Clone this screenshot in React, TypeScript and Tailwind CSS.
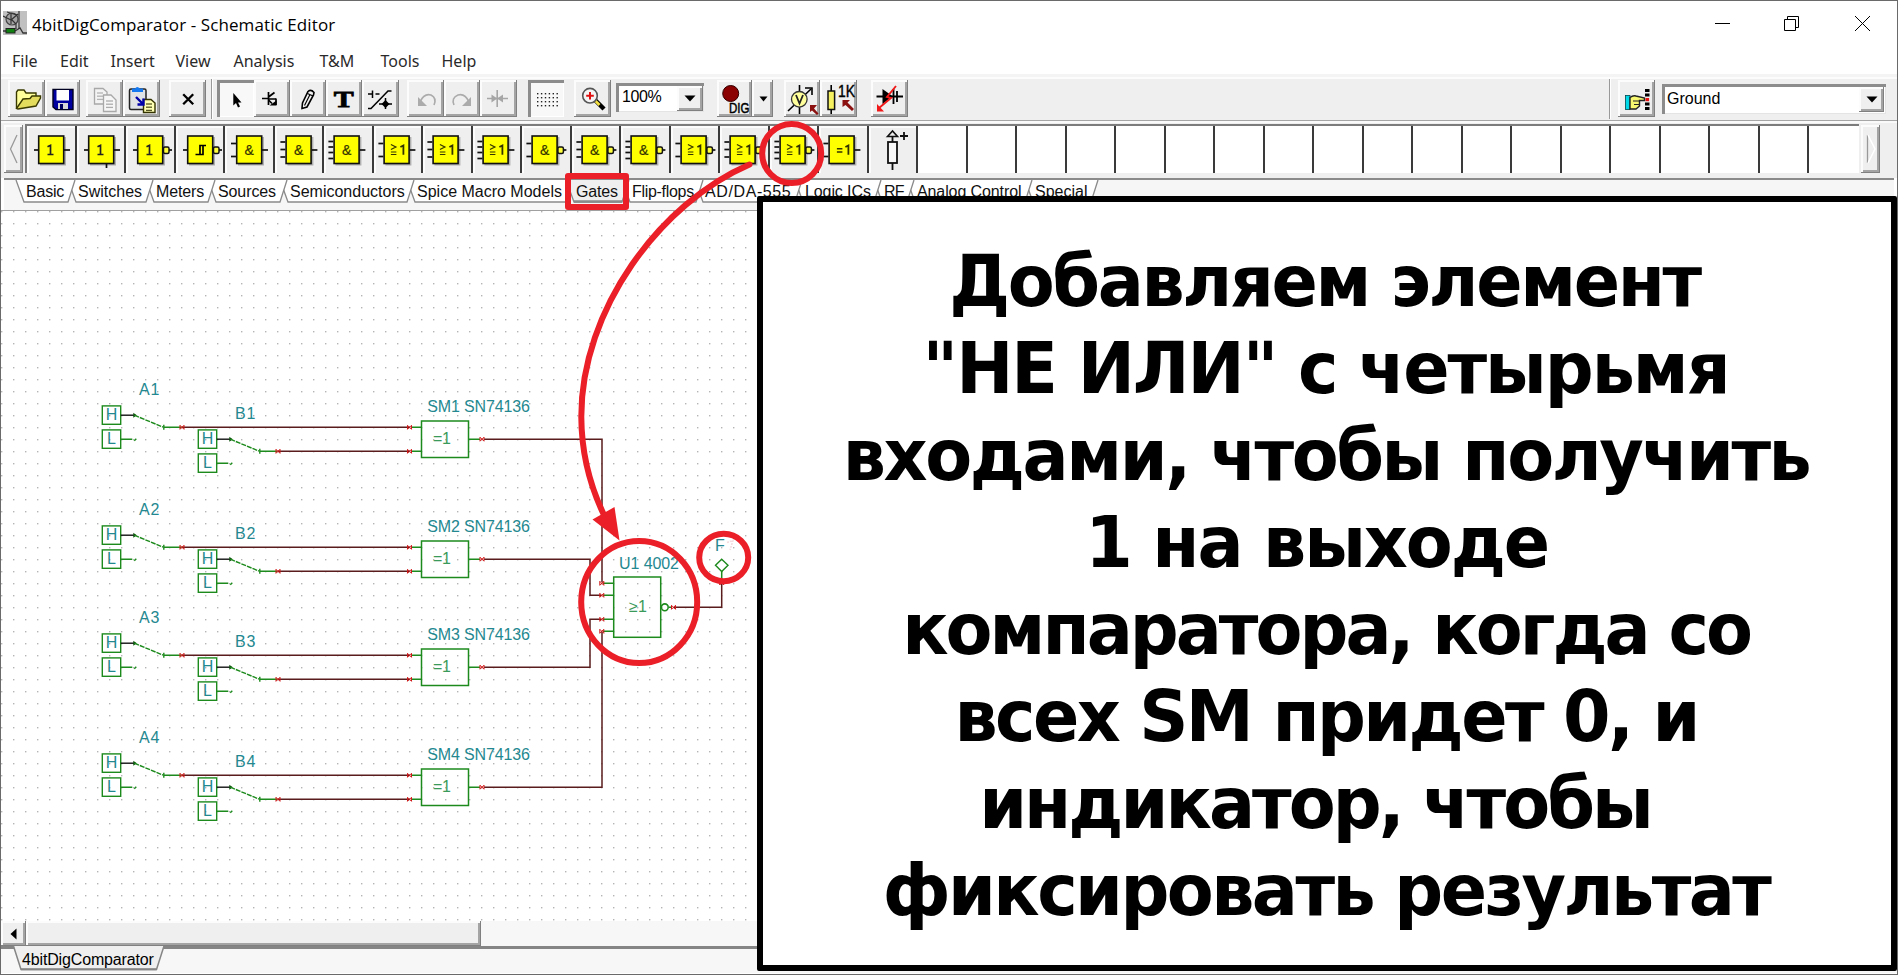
import React from "react";

const UI = "font-['Liberation_Sans',sans-serif]";
const RAISED =
  "shadow-[inset_-1px_-1px_0_#808080,inset_2px_2px_0_#fcfcfc,inset_-3px_-3px_0_#a4a4a4]";
const SUNKEN =
  "bg-[#f8f8f8] shadow-[inset_3px_3px_0_#8c8c8c,inset_-1px_-1px_0_#ffffff]";

function Tool({ className, pressed, children }: { className: string; pressed?: boolean; children: React.ReactNode }) {
  return (
    <button className={`h-[37px] shrink-0 ${pressed ? SUNKEN : RAISED} ${className}`}>
      <svg className="block overflow-visible" width="37" height="37" viewBox="0 0 37 37">
        {children}
      </svg>
    </button>
  );
}

function DropArrow({ className }: { className: string }) {
  return (
    <span className={`flex items-center justify-center bg-[#efefef] ${RAISED} ${className}`}>
      <svg width="12" height="7" viewBox="0 0 12 7">
        <path d="M0.5 0.5H11.5L6 6.5Z" fill="#000" />
      </svg>
    </span>
  );
}

const docLines = (x: number, y: number, w: number, n: number, c: string) =>
  Array.from({ length: n }, (_, i) => <path key={i} d={`M${x} ${y + i * 3.2}h${w}`} stroke={c} strokeWidth="1.3" />);

function MainToolbar() {
  return (
    <div className="flex h-[47px] shrink-0 items-start border-b border-[#a6a6a6] bg-[#efefef] pt-[6px] pl-[7px] shadow-[inset_0_3px_0_#f4f4f4,inset_0_5px_0_#fcfcfc]">
      <Tool className="w-[37px]">
        <path d="M8.5 28V12L10 10H16L18 13H28V18" fill="#ffff9c" stroke="#3a3a00" strokeWidth="1.4" />
        <path d="M8.5 28.5L15 19L22 18.5L24 16H32.5V18L28 26L10 29Z" fill="#e4dc5c" stroke="#3a3a00" strokeWidth="1.4" />
      </Tool>
      <Tool className="w-[35px]">
        <path d="M8 9.5H28V29.5H11L8 27Z" fill="#0000a0" stroke="#000020" strokeWidth="1.4" />
        <rect x="11.5" y="10" width="12.5" height="10.5" fill="#fff" />
        <rect x="13" y="23" width="10" height="6" fill="#d8d8d8" />
        <rect x="15" y="24" width="3" height="5" fill="#000060" />
      </Tool>
      <Tool className="ml-[6px] w-[37px]">
        <path d="M8.5 8.5H17L21 12V24H8.5Z" fill="#f3f3f3" stroke="#a8a8a8" strokeWidth="1.3" />
        {docLines(11, 13, 6, 3, "#b4b4b4")}
        <path d="M17.5 15H25L30 20V31.5H17.5Z" fill="#f6f6f6" stroke="#a8a8a8" strokeWidth="1.3" />
        {docLines(20, 21, 7, 3, "#acacac")}
      </Tool>
      <Tool className="w-[37px]">
        <rect x="6.5" y="9" width="16.5" height="20.5" rx="1.5" fill="#dfe3e6" stroke="#222" strokeWidth="1.5" />
        <path d="M9 12V8.5H12Q14 5.5 17 8.5H20V12Z" fill="#1478f0" />
        <path d="M20.5 19.5H28L32 23V32.5H20.5Z" fill="#ffffb4" stroke="#333300" strokeWidth="1.4" />
        {docLines(23, 24, 6, 3, "#555522")}
        <path d="M13 17L20 24M20.5 18.5V24.5H14.5" fill="none" stroke="#0000a8" strokeWidth="2.4" />
      </Tool>
      <Tool className="ml-[9px] w-[37px]">
        <path d="M14.2 14.2L24.2 24.2M24.2 14.2L14.2 24.2" stroke="#000" strokeWidth="2.3" />
      </Tool>
      <div className="-mt-[1px] ml-[5px] h-[40px] w-[2px] border-l border-[#999] bg-white" />
      <Tool pressed className="ml-[4px] w-[37px]">
        <path d="M16.3 13V25.5L19 23L21 27.5L23 26.5L21 22.5H24.5Z" fill="#000" />
      </Tool>
      <Tool className="w-[36px]">
        <path d="M8 18.5H14M14.5 12V25M14.5 19H22M14.5 17L20.5 12.5" stroke="#000" strokeWidth="1.7" fill="none" />
        <path d="M14.5 20L18 23.5M22 18.5V25" stroke="#000" strokeWidth="1.7" />
        <path d="M15.5 25.5H22.5V20.5Z" fill="#000" />
      </Tool>
      <Tool className="w-[36px]">
        <path d="M12 28L12.5 23L18 11.5Q21 9 24 12.5L23.5 15L17 27L12 28.5Z" fill="#f2f2f2" stroke="#000" strokeWidth="1.6" />
        <path d="M17.5 13.5L23 16M20 14.5L14.5 25.5" stroke="#000" strokeWidth="1.2" />
      </Tool>
      <Tool className="w-[36px]">
        <text x="17.8" y="27" textAnchor="middle" textLength="20" lengthAdjust="spacingAndGlyphs" className="font-['Liberation_Serif',serif] text-[24px] font-bold" stroke="#000" strokeWidth="0.8">T</text>
      </Tool>
      <Tool className="w-[37px]">
        <path d="M6 14H10.5M10.5 10.5V18M13.5 14H17.5M6 28.5H9L26 11H29.5M17 24H30M23.5 18V29" stroke="#000" strokeWidth="1.5" fill="none" />
        <path d="M23.5 20L27.5 24L23.5 28L19.5 24Z" fill="#000" />
      </Tool>
      <Tool className="ml-[8px] w-[37px]">
        <path d="M13 22Q17 13 24 15Q30 18 27 25" fill="none" stroke="#ababab" strokeWidth="1.6" />
        <path d="M11 17V26H20Z" fill="#ababab" />
      </Tool>
      <Tool className="w-[36px]">
        <path d="M25 22Q21 13 14 15Q7 18 10 25" fill="none" stroke="#ababab" strokeWidth="1.6" />
        <path d="M27 17V26H18Z" fill="#ababab" />
      </Tool>
      <Tool className="w-[37px]">
        <path d="M17.2 10V27M7 18.5H28" stroke="#a6a6a6" strokeWidth="1.6" />
        <path d="M11.5 14.5L17.2 18.5L11.5 22.5ZM23 14.5L17.2 18.5L23 22.5Z" fill="#a6a6a6" />
      </Tool>
      <Tool pressed className="ml-[11px] w-[36px]">
        {[0, 1, 2, 3].map((r) =>
          [0, 1, 2, 3, 4, 5].map((c) => <rect key={`${r}-${c}`} x={9 + c * 3.9} y={13 + r * 4} width="1.4" height="1.4" fill="#222" />),
        )}
      </Tool>
      <Tool className="ml-[10px] w-[37px]">
        <path d="M21 20L30 29" stroke="#000" strokeWidth="4.4" />
        <path d="M20 19.5L25.5 25" stroke="#f4e040" strokeWidth="2.6" />
        <circle cx="16" cy="15.7" r="7.3" fill="#f4f4f4" stroke="#555" strokeWidth="1.6" />
        <path d="M16 12V19.6M12.2 15.7H19.8" stroke="#e01010" strokeWidth="2" />
      </Tool>
      <div className="mt-[3px] ml-[5px] flex h-[29px] w-[88px] items-start bg-white shadow-[inset_3px_3px_0_#8c8c8c,inset_-1px_-1px_0_#e4e4e4]">
        <span className={`${UI} mt-[4px] ml-[6px] w-[55px] text-[16px] leading-[20px] tracking-[-0.4px]`}>100%</span>
        <DropArrow className="mt-[3px] h-[25px] w-[26px]" />
      </div>
      <Tool className="ml-[13px] w-[35px]">
        <circle cx="13.7" cy="13.5" r="8" fill="#8b0000" stroke="#300" strokeWidth="1" />
        <text x="12" y="32.5" textLength="20.5" lengthAdjust="spacingAndGlyphs" className="font-['Liberation_Sans',sans-serif] text-[15px]" stroke="#000" strokeWidth="0.5">DIG</text>
      </Tool>
      <Tool className="w-[21px]">
        <path d="M7.5 16.5H15.5L11.5 21.5Z" fill="#000" />
      </Tool>
      <Tool className="ml-[11px] w-[36px]">
        <path d="M15.5 5V34M4 31L27 9" stroke="#000" strokeWidth="1.6" />
        <path d="M21 8H28V15" fill="none" stroke="#000" strokeWidth="1.6" />
        <circle cx="15.3" cy="19.3" r="7.8" fill="#ffff9c" stroke="#333" strokeWidth="1.3" />
        <path d="M12 15L15.5 23.5L19 15" fill="none" stroke="#222" strokeWidth="1.8" />
        <path d="M26 25V32L28 30.5L33 35L34.5 33.5L30 28.5L33 25Z" fill="#8b1010" />
      </Tool>
      <Tool className="w-[37px]">
        <path d="M11.2 5V34" stroke="#000" strokeWidth="1.6" />
        <rect x="8" y="11" width="6.6" height="18.5" fill="#f4f060" stroke="#111" strokeWidth="1.5" />
        <text x="18" y="17" textLength="17" lengthAdjust="spacingAndGlyphs" className="font-['Liberation_Sans',sans-serif] text-[16px]" stroke="#000" strokeWidth="0.4">1K</text>
        <path d="M22.5 20H30L27.5 22.5L34 29L32 31L25.5 25L22.5 27Z" fill="#8b1010" />
      </Tool>
      <Tool className="ml-[14px] w-[37px]">
        <path d="M5.5 16.5H32M26 11V22M22.5 9V24" stroke="#000" strokeWidth="1.8" />
        <path d="M11.5 9V24L22 16.5Z" fill="#000" />
        <path d="M25 6L16 17L20 18L8 28" fill="none" stroke="#f01818" strokeWidth="1.9" />
        <path d="M6 24V31.5H13Z" fill="#f01818" />
      </Tool>
      <div className="-mt-[1px] ml-[701px] h-[40px] w-[2px] border-l border-[#999] bg-white" />
      <Tool className="ml-[7px] w-[37px]">
        <rect x="7.5" y="15.5" width="4.5" height="14" fill="#00d8e8" stroke="#004850" strokeWidth="0.8" />
        <path d="M12 17.5Q15 15 18 16L26.5 18V20.5H21.5V26L18 29H12Z" fill="#f8f870" stroke="#222" strokeWidth="1.4" />
        <path d="M15 21H21M16 24.5H21" stroke="#222" strokeWidth="1.2" />
        {[9, 13.5, 22.5, 27].map((y) => (
          <rect key={y} x="27" y={y} width="4.5" height="3" fill="#000" />
        ))}
        <rect x="27.5" y="18" width="3.6" height="3.2" fill="#e81010" />
      </Tool>
      <div className="mt-[4px] ml-[7px] flex h-[30px] w-[224px] items-start bg-white shadow-[inset_3px_3px_0_#8c8c8c,inset_-1px_-1px_0_#e4e4e4]">
        <span className={`${UI} mt-[5px] ml-[5px] w-[192px] text-[16px] leading-[20px]`}>Ground</span>
        <DropArrow className="mt-[3px] h-[25px] w-[25px]" />
      </div>
    </div>
  );
}

type Gate = { label: string; inputs: number; inverted?: boolean; enable?: boolean };

const gates: Gate[] = [
  { label: "1", inputs: 1 },
  { label: "1", inputs: 1, enable: true },
  { label: "1", inputs: 1, inverted: true },
  { label: "schmitt", inputs: 1, inverted: true },
  { label: "&", inputs: 2 },
  { label: "&", inputs: 3 },
  { label: "&", inputs: 4 },
  { label: "≥1", inputs: 2 },
  { label: "≥1", inputs: 3 },
  { label: "≥1", inputs: 4 },
  { label: "&", inputs: 2, inverted: true },
  { label: "&", inputs: 3, inverted: true },
  { label: "&", inputs: 4, inverted: true },
  { label: "≥1", inputs: 2, inverted: true },
  { label: "≥1", inputs: 3, inverted: true },
  { label: "≥1", inputs: 4, inverted: true },
  { label: "=1", inputs: 2 },
];

const pinRows: Record<number, number[]> = {
  1: [24],
  2: [17.5, 30.5],
  3: [16, 23.5, 31],
  4: [15.5, 21, 26.5, 32.5],
};

function GateIcon({ gate, dx }: { gate: Gate; dx: number }) {
  const { label, inputs, inverted, enable } = gate;
  return (
    <svg className="block" width="47" height="46" viewBox="0 0 47 46">
      <g transform={`translate(${dx} 0)`}>
        <rect x="13" y="11" width="26" height="28.5" fill="#b0b0b0" />
        {pinRows[inputs].map((y) => (
          <path key={y} d={`M${inputs > 1 ? 6 : 7} ${y}H11`} stroke="#111" strokeWidth="1.7" />
        ))}
        {enable && <path d="M29.5 38V42" stroke="#111" strokeWidth="1.7" />}
        <path d={inverted ? "M43 24H46" : "M37 24H43"} stroke="#111" strokeWidth="1.7" />
        {inverted && <rect x="37.5" y="21" width="5.5" height="6.5" rx="1.5" fill="#ffff40" stroke="#111" strokeWidth="1.5" />}
        <rect x="11.7" y="10" width="25" height="27.5" fill="#ffff00" stroke="#111" strokeWidth="1.6" />
        {label === "schmitt" && <path d="M19.5 28.5H24V19.5H30M23.5 28.5H27V19.5" fill="none" stroke="#000" strokeWidth="1.7" />}
        {label === "1" && <path d="M20.5 20.8L23.5 19.3V28.5M20.5 28.5H26.5" fill="none" stroke="#222" strokeWidth="1.7" />}
        {label === "&" && (
          <text x="24.2" y="28.5" textAnchor="middle" fill="#333300" stroke="#333300" strokeWidth="0.2" className="font-['Liberation_Sans',sans-serif] text-[14px]">&amp;</text>
        )}
        {(label === "≥1" || label === "=1") && (
          <g stroke="#333300" strokeWidth="1.5" fill="none">
            <path d="M28 21L31 19.5V28.8" strokeWidth="1.8" />
            {label === "≥1" ? (
              <path d="M18.5 18.5L23.5 21L18.5 23.5M18.5 26H24M18.5 28.5H24" strokeWidth="1.2" />
            ) : (
              <path d="M19.5 22.7H25M19.5 26H25" />
            )}
          </g>
        )}
      </g>
    </svg>
  );
}

function GateStrip() {
  return (
    <div className="flex h-[57px] shrink-0 items-start bg-[#efefef] pt-[3px] pl-[3px] shadow-[inset_0_2px_0_#fafafa]">
      <button className={`mt-[1px] flex h-[48px] w-[19px] items-center justify-center ${RAISED}`}>
        <svg width="9" height="30" viewBox="0 0 9 30">
          <path d="M8 1L1.5 15L8 29" fill="none" stroke="#999" strokeWidth="1.3" />
        </svg>
      </button>
      <div className="ml-[2px] flex h-[49px] w-[1834px] overflow-hidden border-t-2 border-l-2 border-[#7c7c7c] bg-white">
        {gates.map((g, i) => (
          <div key={i} className="h-[47px] w-[49.5px] shrink-0 border-r-2 border-[#3a3a3a] bg-[#efefef] shadow-[inset_2px_2px_0_#fcfcfc]">
            <GateIcon gate={g} dx={i > 5 ? -1.6 : i === 5 ? -0.6 : 0} />
          </div>
        ))}
        <div className="h-[47px] w-[49.5px] shrink-0 border-r-2 border-[#3a3a3a] bg-[#efefef] shadow-[inset_2px_2px_0_#fcfcfc]">
          <svg className="block" width="47" height="46" viewBox="0 0 47 46">
            <path d="M23.5 9V16M23.5 37V44" stroke="#111" strokeWidth="1.8" />
            <path d="M18.5 10.5L23.5 5L28.5 10.5Z" fill="#efefef" stroke="#111" strokeWidth="1.6" />
            <rect x="19" y="16" width="9" height="21" fill="#f8f8f8" stroke="#111" strokeWidth="1.8" />
            <path d="M31 10H39M35 6V14" stroke="#111" strokeWidth="1.8" />
          </svg>
        </div>
        {Array.from({ length: 18 }, (_, i) => (
          <div key={i} className="h-[47px] w-[49.5px] shrink-0 border-r-2 border-[#3a3a3a]" />
        ))}
      </div>
      <button className={`mt-[1px] ml-[2px] flex h-[48px] w-[19px] items-center justify-center ${RAISED}`}>
        <svg width="10" height="30" viewBox="0 0 10 30">
          <path d="M1.5 29V1" stroke="#999" strokeWidth="1.3" />
          <path d="M2 1L9 15L2 29" fill="none" stroke="#fff" strokeWidth="1.6" />
        </svg>
      </button>
    </div>
  );
}

const tabs = [
  { name: "Basic", w: 38, cls: "w-[52px] z-[20] tracking-[-0.2px]" },
  { name: "Switches", w: 64, cls: "w-[78px] z-[19] tracking-[0px]" },
  { name: "Meters", w: 48, cls: "w-[62px] z-[18] tracking-[-0.15px]" },
  { name: "Sources", w: 58, cls: "w-[72px] z-[17] tracking-[-0.1px]" },
  { name: "Semiconductors", w: 113, cls: "w-[127px] z-[16] tracking-[0px]" },
  { name: "Spice Macro Models", w: 145, cls: "w-[159px] z-[15] tracking-[0px]" },
  { name: "Gates", w: 42, cls: "w-[56px] z-[21] tracking-[-0.2px]" },
  { name: "Flip-flops", w: 60, cls: "w-[73px] z-[13] tracking-[-0.3px]" },
  { name: "AD/DA-555", w: 86, cls: "w-[100px] z-[12] tracking-[0.6px]" },
  { name: "Logic ICs", w: 65, cls: "w-[79px] z-[11] tracking-[-0.1px]" },
  { name: "RF", w: 19, cls: "w-[33px] z-[10] tracking-[-0.8px]" },
  { name: "Analog Control", w: 104, cls: "w-[118px] z-[9] tracking-[-0.1px]" },
  { name: "Special", w: 52, cls: "w-[70px] z-[8] tracking-[0px]" },
];

function CategoryTabs() {
  return (
    <div className="mx-[3px] flex h-[32px] shrink-0 border-t-2 border-[#8a8a8a] bg-[#f6f6f6] pl-[22px]">
      {tabs.map((t) => {
        const active = t.name === "Gates";
        const r = t.w;
        return (
          <div key={t.name} className={`relative h-[24px] shrink-0 ${t.cls}`}>
            <svg className="absolute top-0 left-0 overflow-visible" width="1" height="24" viewBox="0 0 1 24">
              <path d={`M-10 0L-2 22H${r + 4}L${r + 11} 0`} fill={active ? "#efefef" : "#ffffff"} stroke="#8a8a8a" strokeWidth="1.3" />
              {active && <path d={`M-2 21.5H${r + 4}`} stroke="#8a8a8a" strokeWidth="2.5" />}
            </svg>
            <span className={`${UI} relative block pt-[2px] text-[16px] leading-[20px] whitespace-nowrap text-[#111]`}>{t.name}</span>
          </div>
        );
      })}
    </div>
  );
}

const GREEN = "#1c8a1c";
const TEAL = "#248890";
const WIRE = "#5a1c1c";
const schText = "font-['Liberation_Sans',sans-serif] text-[16px]";

function Pin({ x, y }: { x: number; y: number }) {
  return <path d={`M${x - 2} ${y - 2}L${x + 2} ${y + 2}M${x + 2} ${y - 2}L${x - 2} ${y + 2}M${x - 2} ${y - 2}V${y + 2}M${x + 2} ${y - 2}V${y + 2}`} stroke="#d01818" strokeWidth="1" />;
}

function LogicSwitch({ x, y, name, nx }: { x: number; y: number; name: string; nx: number }) {
  return (
    <g>
      <text x={nx} y={y - 20.7} fill={TEAL} textLength="20.5" className={schText}>{name}</text>
      {["H", "L"].map((l, i) => (
        <g key={l}>
          <rect x={x} y={y - 9.3 + i * 24} width="18.4" height="18.4" fill="none" stroke={GREEN} strokeWidth="1.4" />
          <text x={x + 9.2} y={y + 5.2 + i * 24} textAnchor="middle" fill={TEAL} className={schText}>{l}</text>
        </g>
      ))}
      <path d={`M${x + 18.5} ${y}H${x + 32}`} stroke="#111" strokeWidth="1.4" />
      <path d={`M${x + 31} ${y - 2.5}V${y + 2.5}L${x + 34.5} ${y}Z`} fill="#0a500a" />
      <path d={`M${x + 32} ${y}L${x + 61} ${y + 12}`} stroke={GREEN} strokeWidth="1.4" strokeDasharray="5 1" />
      <path d={`M${x + 61} ${y + 12}H${x + 79}M${x + 61.5} ${y + 9.5}V${y + 14.5}M${x + 18.5} ${y + 24}H${x + 30}M${x + 32} ${y + 25.5}L${x + 34} ${y + 23.5}`} stroke={GREEN} strokeWidth="1.4" />
    </g>
  );
}

const rows = [
  { n: 1, dy: 0, out: "M484 439.2H602V582" },
  { n: 2, dy: 120, out: "M484 559.2H590V595.2H601" },
  { n: 3, dy: 228, out: "M484 667.2H590V619.2H601" },
  { n: 4, dy: 348, out: "M484 787.2H602V632" },
];

function Schematic() {
  return (
    <svg className="block" width="756" height="711" viewBox="1 211 756 711">
      <defs>
        <pattern id="grid" x="1" y="7" width="12" height="12" patternUnits="userSpaceOnUse">
          <rect x="0" y="0" width="1.4" height="1.4" fill="#b4b4b4" />
        </pattern>
      </defs>
      <rect x="1" y="211" width="756" height="711" fill="#fff" />
      <rect x="1" y="211" width="756" height="711" fill="url(#grid)" />
      {rows.map(({ n, dy, out }) => (
        <g key={n}>
          <LogicSwitch x={102.3} y={415.2 + dy} name={`A${n}`} nx={139} />
          <LogicSwitch x={198.3} y={439.2 + dy} name={`B${n}`} nx={235} />
          <path d={`M182 ${427.3 + dy}H410M278 ${451.3 + dy}H410`} stroke={WIRE} strokeWidth="1.5" />
          <path d={`M411 ${427.3 + dy}H421M411 ${451.3 + dy}H421M469 ${439.2 + dy}H480`} stroke={GREEN} strokeWidth="1.5" />
          <rect x="421.5" y={421 + dy} width="47" height="36.5" fill="none" stroke={GREEN} strokeWidth="1.5" />
          <text x="433" y={444 + dy} fill="#3a9a5a" textLength="18" className={schText}>=1</text>
          <text x="427.3" y={412.2 + dy} fill={TEAL} textLength="102.5" className={schText}>{`SM${n} SN74136`}</text>
          <path d={out} fill="none" stroke={WIRE} strokeWidth="1.5" />
          <Pin x={182} y={427.3 + dy} />
          <Pin x={278} y={451.3 + dy} />
          <Pin x={409.5} y={427.3 + dy} />
          <Pin x={409.5} y={451.3 + dy} />
          <Pin x={482} y={439.2 + dy} />
        </g>
      ))}
      <rect x="613.7" y="577" width="47" height="60.3" fill="none" stroke={GREEN} strokeWidth="1.5" />
      <path d="M603 583.3H613M603 595.3H613M603 619.3H613M603 631.3H613M669 607.3H672M721.7 571V584" stroke={GREEN} strokeWidth="1.5" />
      <circle cx="664.8" cy="607.3" r="3.4" fill="none" stroke={GREEN} strokeWidth="1.6" />
      <path d="M674 607.3H721.7V584" fill="none" stroke={WIRE} strokeWidth="1.5" />
      {[583.3, 595.3, 619.3, 631.3].map((y) => (
        <Pin key={y} x={601.8} y={y} />
      ))}
      <Pin x={673.5} y={607.3} />
      <Pin x={721.7} y={583} />
      <path d="M721.7 559.3L728 565.3L721.7 571.5L715.5 565.3Z" fill="none" stroke={GREEN} strokeWidth="1.4" />
      <text x="619" y="568.5" fill={TEAL} textLength="60" className={schText}>U1 4002</text>
      <text x="629" y="612" fill="#3a9a5a" textLength="18" className={schText}>≥1</text>
      <text x="715" y="550.5" fill={TEAL} className={schText}>F</text>
      <path d="M727 542.5L733 540.5L730 550" fill="none" stroke="#f4dce0" strokeWidth="1.6" strokeDasharray="2 1" />
    </svg>
  );
}

const captionLines = [
  { text: "Добавляем элемент", cls: "pr-[5px] tracking-[-2.24px]" },
  { text: "\"НЕ ИЛИ\" с четырьмя", cls: "pr-[3px] tracking-[-1.93px]" },
  { text: "входами, чтобы получить", cls: "pr-[2px] tracking-[-2.29px]" },
  { text: "1 на выходе", cls: "pr-[20px] tracking-[-2px]" },
  { text: "компаратора, когда со", cls: "pr-[2px] tracking-[-2.83px]" },
  { text: "всех SM придет 0, и", cls: "pr-[2px] tracking-[-2.48px]" },
  { text: "индикатор, чтобы", cls: "pr-[23px] tracking-[-2.8px]" },
  { text: "фиксировать результат", cls: "pr-[2px] tracking-[-2.43px]" },
];

function Caption() {
  return (
    <div className="absolute top-[196px] left-[757px] z-40 flex h-[775px] w-[1140px] flex-col items-center rounded-[2px] border-[6px] border-black bg-white pt-[36px]">
      <div className="flex scale-x-[1.055] flex-col items-center">
        {captionLines.map((l) => (
          <div
            key={l.text}
            className={`h-[87px] font-['DejaVu_Sans_Condensed','DejaVu_Sans',sans-serif] text-[72px] leading-[87px] font-bold whitespace-nowrap text-black [font-stretch:condensed] ${l.cls}`}
          >
            {l.text}
          </div>
        ))}
      </div>
    </div>
  );
}

function Highlights() {
  return (
    <svg className="pointer-events-none absolute top-0 left-0 z-50" width="860" height="700" viewBox="0 0 860 700" fill="none" stroke="#ea1f27" strokeWidth="6">
      <circle cx="791.7" cy="153.5" r="29.5" />
      <rect x="568" y="176" width="58" height="31" strokeLinejoin="round" />
      <ellipse cx="639.2" cy="602" rx="58" ry="61" />
      <ellipse cx="723.7" cy="557.5" rx="24.5" ry="23.7" />
      <path d="M749.5 164.5C660 203 581 310 581.3 417C581.5 455 592 490 604 515" strokeLinecap="round" />
      <path d="M619.5 540.5L592.5 519.5L614.5 507Z" fill="#ea1f27" stroke="none" />
    </svg>
  );
}

const menu = [
  { name: "File", cls: "w-[48px]" },
  { name: "Edit", cls: "w-[50.5px]" },
  { name: "Insert", cls: "w-[65px]" },
  { name: "View", cls: "w-[58px]" },
  { name: "Analysis", cls: "w-[86px]" },
  { name: "T&M", cls: "w-[61px]" },
  { name: "Tools", cls: "w-[61px]" },
  { name: "Help", cls: "w-[60px]" },
];

export default function App() {
  return (
    <div className="relative h-[975px] w-[1898px] overflow-hidden bg-white">
      <div className="flex h-[975px] w-[1898px] flex-col border border-[#6a6a6a]">
        <header className="flex h-[47px] shrink-0 items-start">
          <svg className="mt-[10px] ml-[2px]" width="24" height="24" viewBox="0 0 24 24">
            <rect width="24" height="24" fill="#c0c0c0" />
            <circle cx="9" cy="8" r="6" fill="#a4a4a4" stroke="#444" strokeWidth="1.2" />
            <path d="M0 5L8 9M8 3V13M8 9L15 3M8 8L13 13V18M4 1L14 4M16 0V18" stroke="#333" strokeWidth="1.2" fill="none" />
            <path d="M0 20H3M12 20L17 17L20 22H24" stroke="#333" strokeWidth="1.3" fill="none" />
            <rect x="3" y="17.5" width="9" height="4.5" fill="#108010" stroke="#222" />
          </svg>
          <h1 className="mt-[12px] ml-[5px] font-['Open_Sans',sans-serif] text-[17px] leading-[24px] tracking-[0.1px] text-black">
            4bitDigComparator - Schematic Editor
          </h1>
          <svg className="mt-[14px] ml-auto mr-[26px]" width="157" height="17" viewBox="1714 15 157 17" fill="none" stroke="#000" strokeWidth="1">
            <path d="M1715 23.5H1730" />
            <path d="M1784.5 19.5H1795.5V30.5H1784.5ZM1787.5 19.5V16.5H1798.5V27.5H1795.5" />
            <path d="M1855 16L1870 31M1870 16L1855 31" />
          </svg>
        </header>
        <nav className="flex h-[26px] shrink-0 pl-[11px] font-['Noto_Sans',sans-serif] text-[16px] leading-[27px] tracking-[0px] text-[#2a2a2a]">
          {menu.map((m) => (
            <span key={m.name} className={`shrink-0 ${m.cls}`}>{m.name}</span>
          ))}
        </nav>
        <MainToolbar />
        <GateStrip />
        <CategoryTabs />
        <main className="h-[711px] shrink-0 border-t border-[#a0a0a0] bg-white">
          <Schematic />
        </main>
        <div className="flex h-[25px] shrink-0 bg-[#f7f7f7]">
          <button className={`flex h-[25px] w-[25px] items-center justify-center bg-[#efefef] ${RAISED}`}>
            <svg width="7" height="12" viewBox="0 0 7 12">
              <path d="M6.5 0.5V11.5L0.5 6Z" fill="#000" />
            </svg>
          </button>
          <div className={`h-[25px] w-[455px] bg-[#efefef] ${RAISED}`} />
        </div>
        <footer className="flex h-[27px] shrink-0 border-t-[3px] border-[#858585] bg-[#f7f7f7] pl-[12px]">
          <div className="relative -mt-[3px] h-[26px] w-[152px]">
            <svg className="absolute top-0 left-0" width="152" height="26" viewBox="0 0 152 26">
              <path d="M0.5 0L8 23.5H143.5L151 0" fill="#efefef" stroke="#858585" strokeWidth="1.5" />
              <path d="M8 23.3H143.5" stroke="#858585" strokeWidth="2" />
            </svg>
            <span className={`${UI} relative block pt-[4px] pl-[9px] text-[16px] leading-[20px] tracking-[-0.15px] whitespace-nowrap text-black`}>4bitDigComparator</span>
          </div>
        </footer>
      </div>
      <Caption />
      <Highlights />
    </div>
  );
}
